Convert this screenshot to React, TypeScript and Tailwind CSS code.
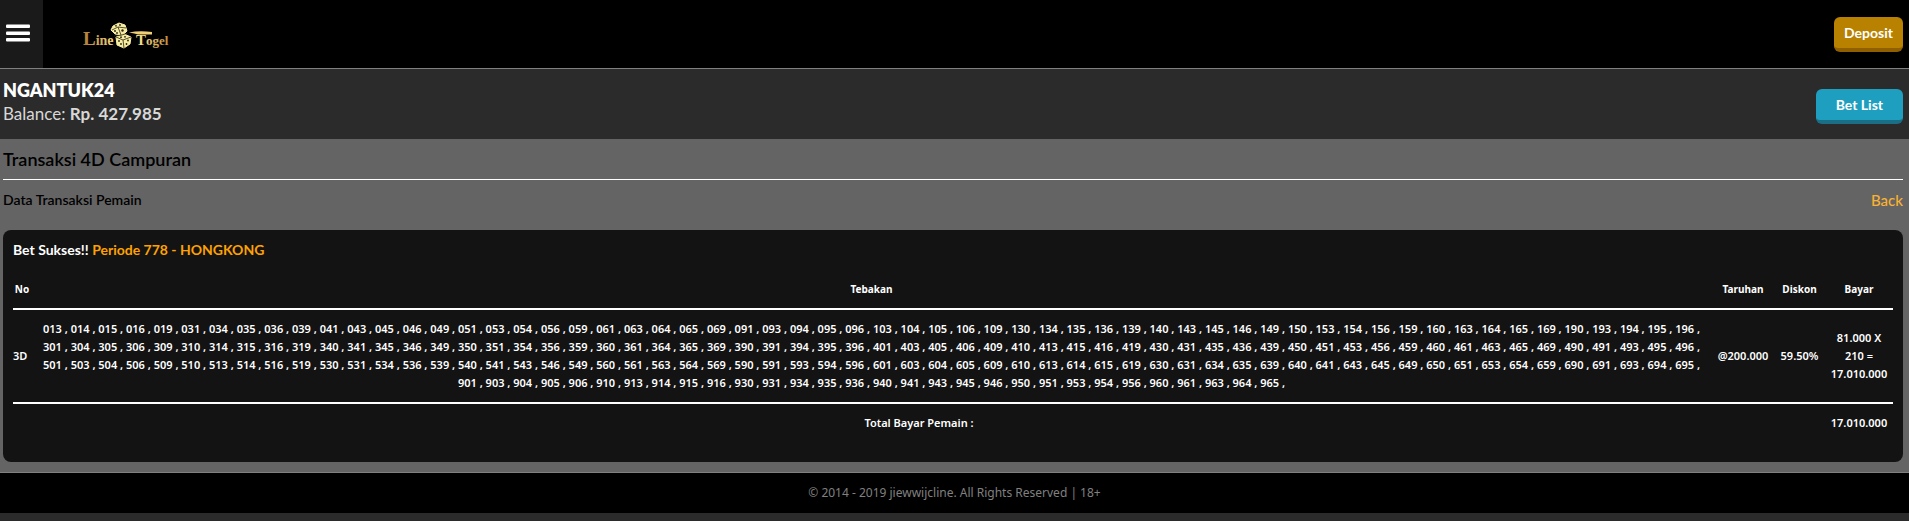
const MEMBER = { name: 'NGANTUK24', balance: 'Rp. 427.985' }

const NUMBERS = [
    '013 014 015 016 019 031 034 035 036 039 041 043 045 046 049 051 053 054 056 059 061 063 064 065 069 091 093 094 095 096',
    '103 104 105 106 109 130 134 135 136 139 140 143 145 146 149 150 153 154 156 159 160 163 164 165 169 190 193 194 195 196',
    '301 304 305 306 309 310 314 315 316 319 340 341 345 346 349 350 351 354 356 359 360 361 364 365 369 390 391 394 395 396',
    '401 403 405 406 409 410 413 415 416 419 430 431 435 436 439 450 451 453 456 459 460 461 463 465 469 490 491 493 495 496',
    '501 503 504 506 509 510 513 514 516 519 530 531 534 536 539 540 541 543 546 549 560 561 563 564 569 590 591 593 594 596',
    '601 603 604 605 609 610 613 614 615 619 630 631 634 635 639 640 641 643 645 649 650 651 653 654 659 690 691 693 694 695',
    '901 903 904 905 906 910 913 914 915 916 930 931 934 935 936 940 941 943 945 946 950 951 953 954 956 960 961 963 964 965',
].join(' ').split(' ')

const BETS = [
    { type: '3D', numbers: NUMBERS, stake: '@200.000', discount: '59.50%', pay: '81.000 X 210 = 17.010.000' },
]

function Logo() {
    return (
        <svg width="92" height="28" viewBox="0 0 92 28" role="img" aria-label="Line Togel">
            <defs>
                <linearGradient id="gold" gradientUnits="userSpaceOnUse" x1="0" x2="86" y1="0" y2="0">
                    <stop offset="0" stopColor="#b07a35" />
                    <stop offset="0.35" stopColor="#f3d67c" />
                    <stop offset="0.65" stopColor="#f6e08a" />
                    <stop offset="1" stopColor="#c08b3c" />
                </linearGradient>
            </defs>
            <g fill="url(#gold)" fontFamily='"Liberation Serif", serif' fontWeight="700">
                <text x="0" y="23" fontSize="19">L<tspan fontSize="14">ine</tspan></text>
                <text x="53" y="23" fontSize="15">T<tspan fontSize="13">ogel</tspan></text>
            </g>
            <path d="M46 10.500Q56 8.500 69 10L69 12.500L55 12.500Q52 11.500 46 10.500Z" fill="#f0cf76" />
            {/* dice */}
            <g fill="#f7eda0" stroke="#f7eda0" strokeWidth="1" strokeLinejoin="round">
                <path d="M30 4L36 1L42 3L44 9L40 13L32 12L28 8Z" />
                <path d="M33 15L41 12L48 15L47 22L41 26L34 23Z" />
            </g>
            <g fill="none" stroke="#2a2413" strokeWidth="0.8">
                <path d="M29 8L35 5L43 6M35 5L38 13M33 15L40 18L48 15M40 18L41 26M31 14Q38 14 45 11" />
            </g>
            <g fill="#2a2413">
                <circle cx="33" cy="3.800" r="0.900" />
                <circle cx="37" cy="3" r="0.900" />
                <circle cx="32" cy="9" r="1" />
                <circle cx="34" cy="11" r="0.900" />
                <circle cx="39.500" cy="8.500" r="1.200" />
                <circle cx="38" cy="15.200" r="0.900" />
                <circle cx="42" cy="14.800" r="0.900" />
                <circle cx="36" cy="19" r="0.900" />
                <circle cx="38" cy="22" r="0.900" />
                <circle cx="45" cy="18.500" r="0.900" />
                <circle cx="43.500" cy="22" r="0.900" />
            </g>
        </svg>
    )
}

function MenuIcon() {
    return (
        <svg width="24" height="18" viewBox="0 0 24 18" fill="#fff" aria-hidden="true">
            <rect y="0.500" width="24" height="3.500" rx="1" />
            <rect y="7.500" width="24" height="3.500" rx="1" />
            <rect y="14" width="24" height="3.500" rx="1" />
        </svg>
    )
}

export default function App() {
    return (
        <div className="min-h-screen bg-[#2b2b2b] font-[Lato,sans-serif] text-white">
            <header className="flex h-[69px] items-center justify-between border-b border-[#808080] bg-black pr-1.5">
                <div className="flex h-full items-center">
                    <button aria-label="Menu" className="flex h-full w-[43px] items-center bg-[#1a1a1a] pb-0.5 pl-[6px]">
                        <MenuIcon />
                    </button>
                    <a href="#" className="ml-10 pt-1">
                        <Logo />
                    </a>
                </div>
                <button className="rounded-md border-b-4 border-[#8f5f00] bg-[#b88100] px-2.5 py-1 text-[14px] leading-[23px] font-bold">Deposit</button>
            </header>

            <section className="flex h-[70px] items-center justify-between pt-[5px] pr-1.5 pl-[3px]">
                <div className="pb-2.5">
                    <h1 className="text-[18px] leading-6 font-extrabold">{MEMBER.name}</h1>
                    <p className="text-[17px] leading-6 text-[#d8d8d8]">Balance: <b>{MEMBER.balance}</b></p>
                </div>
                <button className="rounded-md border-b-4 border-[#1a6f86] bg-[#1f9fc0] px-5 py-1 text-[14px] leading-[23px] font-bold">Bet List</button>
            </section>

            <main className="bg-[#646464] pr-1.5 pb-2.5 pl-[3px]">
                <h2 className="border-b border-white py-1.5 text-[18px] leading-7 font-semibold text-black">Transaksi 4D Campuran</h2>
                <div className="flex items-center justify-between pt-2 pb-[18px] leading-6">
                    <h3 className="text-[14px] font-semibold text-black">Data Transaksi Pemain</h3>
                    <a href="#" className="text-[15px] font-medium text-[#f9b233]">Back</a>
                </div>

                <div className="rounded-lg bg-[#131313] px-2.5 pt-2 pb-5">
                    <h4 className="text-[14px] leading-6 font-bold">Bet Sukses!! <span className="text-[#ffa200]">Periode 778 - HONGKONG</span></h4>
                    <table className="mt-2 w-full table-fixed text-center font-['Noto_Sans',sans-serif] text-[11px] leading-[18px] font-semibold">
                        <colgroup>
                            <col className="w-[18px]" />
                            <col />
                            <col className="w-[62px]" />
                            <col className="w-[51px]" />
                            <col className="w-[68px]" />
                        </colgroup>
                        <thead>
                            <tr className="border-b-2 border-white text-[10px] font-bold">
                                <th className="py-2.5">No</th>
                                <th className="py-2.5">Tebakan</th>
                                <th className="py-2.5">Taruhan</th>
                                <th className="py-2.5">Diskon</th>
                                <th className="py-2.5">Bayar</th>
                            </tr>
                        </thead>
                        <tbody>
                            {BETS.map(bet => (
                                <tr key={bet.type} className="border-b-2 border-white">
                                    <td className="py-2.5 text-left">{bet.type}</td>
                                    <td className="px-1 py-2.5">{bet.numbers.map(n => n + '\u00a0, ').join('')}</td>
                                    <td className="py-2.5">{bet.stake}</td>
                                    <td className="py-2.5">{bet.discount}</td>
                                    <td className="px-[5px] py-2.5">{bet.pay}</td>
                                </tr>
                            ))}
                        </tbody>
                        <tfoot>
                            <tr>
                                <td colSpan={4} className="py-2.5">Total Bayar Pemain :</td>
                                <td className="py-2.5">17.010.000</td>
                            </tr>
                        </tfoot>
                    </table>
                </div>
            </main>

            <footer className="border-t border-[#808080] bg-black py-2.5 text-center font-['Noto_Sans',sans-serif] text-[12px] leading-5 text-[#808080]">
                © 2014 - 2019 jiewwijcline. All Rights Reserved | 18+
            </footer>
        </div>
    )
}
